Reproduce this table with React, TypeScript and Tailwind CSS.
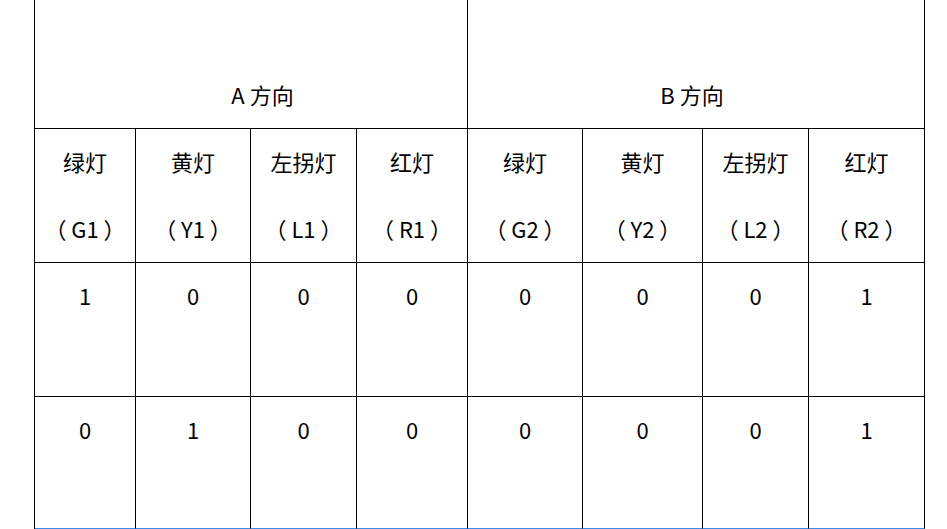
const cols = ['w-[101px]', 'w-[115px]', 'w-[106px]', 'w-[111px]', 'w-[115px]', 'w-[120px]', 'w-[106px]', 'w-[116px]']

const heads = [
  ['绿灯', '（ G1 ）'],
  ['黄灯', '（ Y1 ）'],
  ['左拐灯', '（ L1 ）'],
  ['红灯', '（ R1 ）'],
  ['绿灯', '（ G2 ）'],
  ['黄灯', '（ Y2 ）'],
  ['左拐灯', '（ L2 ）'],
  ['红灯', '（ R2 ）'],
]

const rows = [
  ['1', '0', '0', '0', '0', '0', '0', '1'],
  ['0', '1', '0', '0', '0', '0', '0', '1'],
]

export default function App() {
  return (
    <div className="w-[947px] h-[529px] overflow-hidden bg-white text-black text-[22px] leading-[67px] font-['Noto_Sans_CJK_SC','Noto_Sans',sans-serif]">
      <div className="ml-[34px] -mt-[6px] w-[891px] border-l border-black">
        <div className="flex">
          <div className="w-[433px] h-[135px] border-t border-r border-b border-black text-center pt-[66px] pl-[23px]">
            A 方向
          </div>
          <div className="w-[457px] h-[135px] border-t border-r border-b border-black text-center pt-[66px] pr-[8px]">
            B 方向
          </div>
        </div>
        <div className="flex">
          {heads.map((h, i) => (
            <div key={i} className={`${cols[i]} h-[134px] border-r border-b border-black text-center`}>
              <div className="-mt-[1px]">{h[0]}</div>
              <div>{h[1]}</div>
            </div>
          ))}
        </div>
        {rows.map((r, ri) => (
          <div key={ri} className="flex">
            {r.map((v, i) => (
              <div
                key={i}
                className={`${cols[i]} border-r border-b text-center ${ri === 1 ? 'h-[132px] border-b-[#3b8ce8] border-r-black' : 'h-[134px] border-black'}`}
              >
                <div className="-mt-[1px]">{v}</div>
              </div>
            ))}
          </div>
        ))}
      </div>
    </div>
  )
}
